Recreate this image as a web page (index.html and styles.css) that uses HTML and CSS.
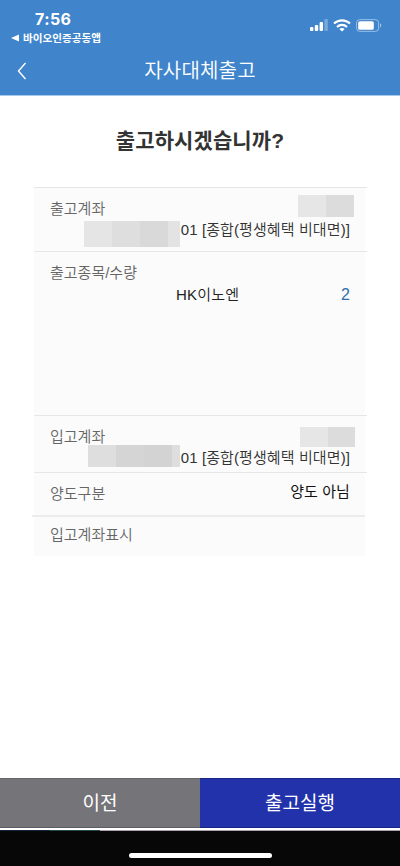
FILE: index.html
```html
<!DOCTYPE html>
<html lang="ko">
<head>
<meta charset="UTF-8">
<meta name="viewport" content="width=device-width, initial-scale=1.0">
<title>자사대체출고</title>
<link rel="stylesheet" href="styles.css">
</head>
<body>
<div class="main-container">
<header class="header">
    <div class="status-bar">
        <div class="status-left">
            <div class="time">7:56</div>
            <div class="back-app">
                <svg width="8" height="8" viewBox="0 0 8 8"><path d="M8 .5v7L0 4z" fill="#fff"/></svg>
                <span>바이오인증공동앱</span>
            </div>
        </div>
        <div class="status-icons">
            <svg width="18" height="13" viewBox="0 0 18 13" fill="#fff">
                <rect x="0" y="8" width="3.4" height="4" rx="1"/>
                <rect x="4.8" y="6" width="3.4" height="6" rx="1"/>
                <rect x="9.6" y="3" width="3.4" height="9" rx="1"/>
                <rect x="14.4" y="0" width="3.4" height="12" rx="1" opacity=".3"/>
            </svg>
            <svg width="18" height="13" viewBox="0 0 18 13" fill="none" stroke="#fff" stroke-width="2.1">
                <path d="M1 4.6C5.5.3 12.5.3 17 4.6"/>
                <path d="M4 7.9c2.9-2.7 7.1-2.7 10 0"/>
                <path d="M9 12.6 6.3 10c1.6-1.3 3.8-1.3 5.4 0z" fill="#fff" stroke="none"/>
            </svg>
            <svg width="26" height="13" viewBox="0 0 26 13">
                <rect x=".6" y=".6" width="22" height="11.8" rx="3.2" fill="none" stroke="#fff" stroke-opacity=".45"/>
                <rect x="2.2" y="2.2" width="15.6" height="8.6" rx="1.6" fill="#fff"/>
                <path d="M24 4.5v4c1.8-.6 1.8-3.4 0-4z" fill="#fff" opacity=".5"/>
            </svg>
        </div>
    </div>
    <div class="nav">
        <svg class="back" width="10" height="18" viewBox="0 0 10 18"><path d="M8.5 1 1.5 9l7 8" fill="none" stroke="#fff" stroke-width="1.4"/></svg>
        <h1>자사대체출고</h1>
    </div>
</header>

<main class="content">
    <h2>출고하시겠습니까?</h2>
    <div class="info">
        <div class="row row-out">
            <div class="label">출고계좌</div>
            <div class="values">
                <div class="mask-name"></div>
                <div class="account"><span class="mask-number"></span><span class="value">01 [종합(평생혜택 비대면)]</span></div>
            </div>
        </div>
        <div class="row row-stock">
            <div class="label">출고종목/수량</div>
            <div class="stock"><span class="stock-name">HK이노엔</span><span class="count">2</span></div>
        </div>
        <div class="row row-in">
            <div class="label">입고계좌</div>
            <div class="values">
                <div class="mask-name"></div>
                <div class="account"><span class="mask-number"></span><span class="value">01 [종합(평생혜택 비대면)]</span></div>
            </div>
        </div>
        <div class="row row-type">
            <div class="label">양도구분</div>
            <div class="type">양도 아님</div>
        </div>
        <div class="row row-memo">
            <div class="label">입고계좌표시</div>
        </div>
    </div>
</main>

<div class="buttons">
    <button class="prev">이전</button>
    <button class="submit">출고실행</button>
</div>
<div class="home-area"><div class="home-bar"></div></div>
</div>
</body>
</html>
```
FILE: styles.css
```css
* {
    box-sizing: border-box;
}
body, html {
    height: 100%;
    margin: 0;
    font-family: "Liberation Sans", "Noto Sans CJK KR", sans-serif;
}
svg {
    display: block;
}
.main-container {
    height: 866px;
    display: flex;
    flex-direction: column;
    background: #fff;
}
.header {
    height: 96px;
    background: #4085cc;
    border-bottom: 1px solid #a4c9ed;
    color: #fff;
}
.status-bar {
    height: 47px;
    display: flex;
    justify-content: space-between;
    padding: 9px 18px 0 11px;
}
.time {
    font-family: Inter, sans-serif;
    font-size: 16px;
    font-weight: 700;
    line-height: 20px;
    letter-spacing: .4px;
    padding-left: 24px;
}
.back-app {
    display: flex;
    align-items: center;
    gap: 4px;
    font-size: 10.6px;
    font-weight: 700;
    line-height: 18px;
    white-space: nowrap;
}
.status-icons {
    display: flex;
    gap: 5px;
    padding-top: 10px;
}
.nav {
    height: 48px;
    display: grid;
    grid-template-columns: 40px 1fr 40px;
    align-items: center;
}
.back {
    margin-left: 17px;
}
.nav h1 {
    margin: 0;
    font-size: 20px;
    font-weight: 350;
    line-height: 30px;
    letter-spacing: .2px;
    text-align: center;
}
.content {
    flex: 1;
}
.content h2 {
    margin: 29px 0 31px;
    font-size: 21px;
    font-weight: 700;
    line-height: 31px;
    color: #333;
    letter-spacing: .1px;
    text-align: center;
}
.info {
    width: 331px;
    margin-left: 34px;
    background: #fbfbfb;
    font-size: 15px;
    font-weight: 350;
    line-height: 22px;
}
.row {
    position: relative;
    padding: 11px 15px 0 16px;
}
.row::before {
    content: "";
    position: absolute;
    left: 0;
    right: -2px;
    top: 0;
    height: 1px;
    background: #e6e6e6;
}
.label {
    color: #666;
}
.values {
    display: flex;
    flex-direction: column;
    align-items: flex-end;
}
.account {
    display: flex;
    align-items: flex-start;
    color: #333;
}
.value {
    white-space: nowrap;
    letter-spacing: .1px;
}
.row-out {
    height: 64px;
}
.row-out .values {
    margin-top: -25px;
}
.row-stock {
    height: 164px;
}
.row-in {
    height: 57px;
}
.row-in .values {
    margin-top: -21px;
}
.row-type {
    height: 43px;
    display: flex;
    justify-content: space-between;
}
.row-memo {
    height: 41px;
    padding-top: 9px;
}
.row-memo::before {
    left: -2px;
    right: 0;
    height: 2px;
    background: #ececec;
}
.mask-name {
    width: 56px;
    height: 22px;
    margin-right: -4px;
    background: linear-gradient(90deg, #e6e6e6 28px, #dcdcdc 28px);
}
.mask-number {
    width: 96px;
    height: 26px;
    margin-right: 1px;
    background: linear-gradient(90deg, #e5e5e5 28px, #dedede 28px 56px, #d9d9d9 56px 84px, #e3e3e3 84px);
}
.row-out .account {
    margin-top: 2px;
}
.row-out .mask-number {
    margin-top: 2px;
}
.row-in .mask-name {
    width: 55px;
    height: 20px;
    margin-right: -5px;
}
.row-in .mask-number {
    width: 92px;
    height: 22px;
    margin-top: -2px;
    background: linear-gradient(90deg, #dedede 28px, #d5d5d5 28px 56px, #d3d3d3 56px 84px, #dedede 84px);
}
.stock {
    display: grid;
    grid-template-columns: 126px 1fr auto;
    color: #222;
}
.stock-name {
    grid-column: 2;
    letter-spacing: .2px;
}
.count {
    color: #2b70ae;
    font-size: 16px;
}
.type {
    color: #111;
    font-weight: 400;
    letter-spacing: .1px;
    margin-top: -2px;
}
.buttons {
    height: 50px;
    display: flex;
    margin-bottom: 2px;
}
.buttons button {
    flex: 1;
    border: 0;
    border-top: 1px solid #65656b;
    border-bottom: 1px solid #5c5b61;
    padding: 0 0 3px;
    color: #fff;
    background: #757479;
    font-family: inherit;
    font-size: 19px;
    font-weight: 400;
}
.buttons .submit {
    background: #2232ab;
    border-color: #182486;
}
.home-area {
    height: 36px;
    background: linear-gradient(90deg, #14243c 50px, #22494b 50px 100px, #aaa3ad 100px) no-repeat top / 100% 1px #070707;
    padding-top: 23px;
}
.home-bar {
    width: 143px;
    height: 5px;
    margin: 0 auto;
    border-radius: 3px;
    background: #fff;
}
```
